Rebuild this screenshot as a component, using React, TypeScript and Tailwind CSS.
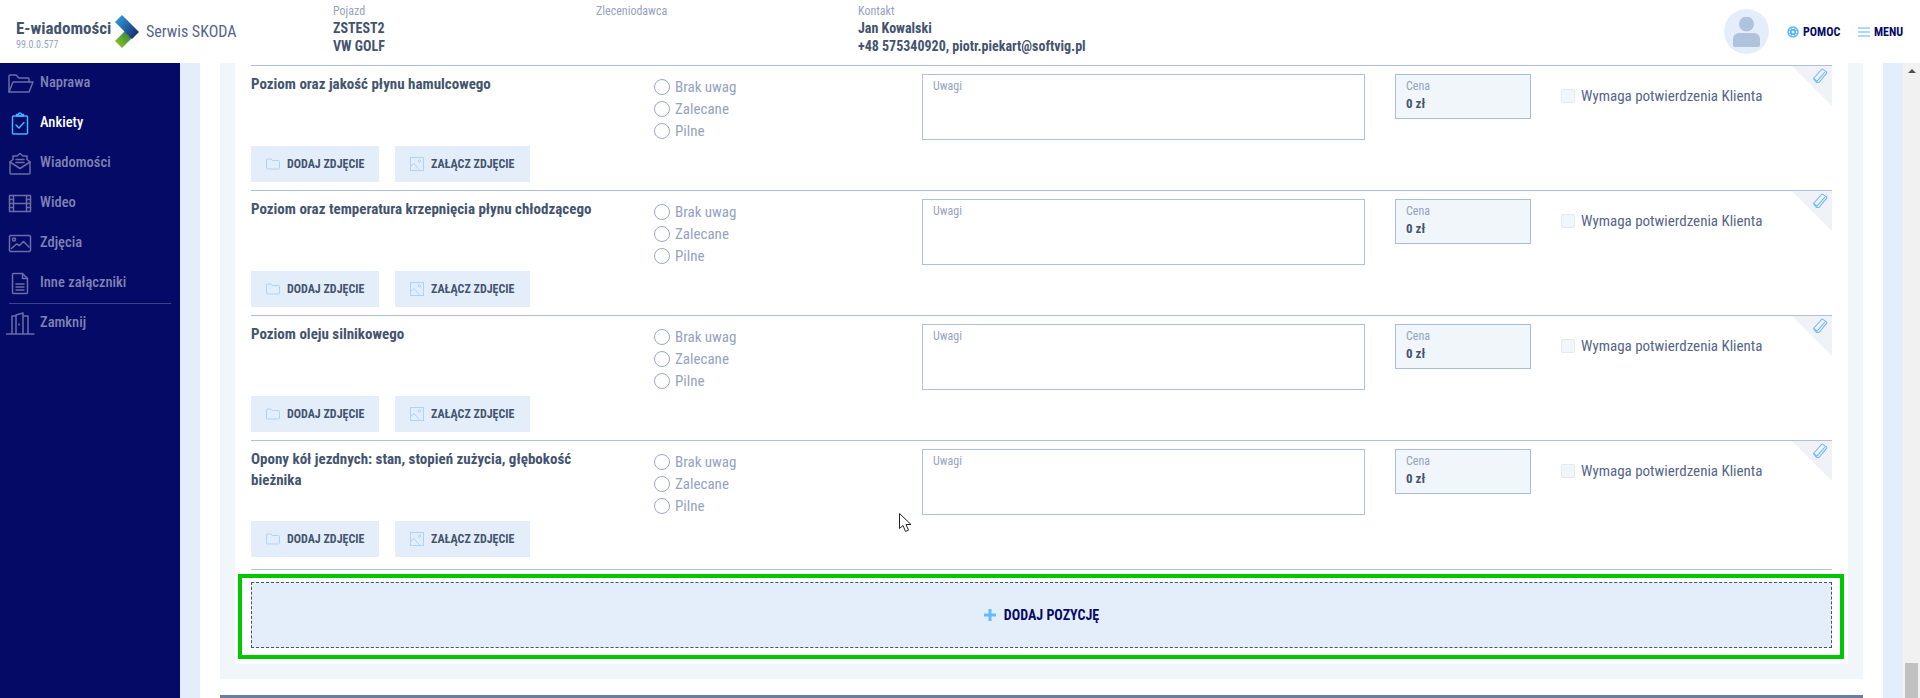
import React from "react";

const rows = [
  { title: "Poziom oraz jakość płynu hamulcowego", h: "h-[125px]" },
  { title: "Poziom oraz temperatura krzepnięcia płynu chłodzącego", h: "h-[125px]" },
  { title: "Poziom oleju silnikowego", h: "h-[125px]" },
  { title: "Opony kół jezdnych: stan, stopień zużycia, głębokość bieżnika", h: "h-[129px]" },
];

const Ico = ({ children, active }: { children: React.ReactNode; active?: boolean }) => (
  <svg width="30" height="26" viewBox="0 0 30 26" fill="none" stroke={active ? "#3fb4ff" : "#6a6da6"} strokeWidth="1.5" strokeLinejoin="round" strokeLinecap="round">
    {children}
  </svg>
);

const menu = [
  {
    label: "Naprawa",
    icon: (
      <Ico>
        <path d="M3 22V6a1 1 0 0 1 1-1h6l3 3h9a1 1 0 0 1 1 1v3" />
        <path d="M3 22l4-10h20l-4 10z" />
      </Ico>
    ),
  },
  {
    label: "Ankiety",
    active: true,
    icon: (
      <Ico active>
        <rect x="6.500" y="6" width="15" height="18" rx="1" />
        <path d="M10.500 6V4.500h2a1.500 1.500 0 0 1 3 0h2V6z" />
        <path d="M10 15l3 3 5-5.500" />
      </Ico>
    ),
  },
  {
    label: "Wiadomości",
    icon: (
      <Ico>
        <path d="M4 12v11a1 1 0 0 0 1 1h18a1 1 0 0 0 1-1V12l-3-2.500V6h-4l-3-2.500L11 6H7v3.500z" />
        <path d="M4 12l10 6.500L24 12M10 9.500h8M10 12.500h8" />
      </Ico>
    ),
  },
  {
    label: "Wideo",
    icon: (
      <Ico>
        <rect x="3.500" y="5.500" width="21" height="16" />
        <path d="M7.500 5.500v16M20.500 5.500v16M7.500 13.500h13M3.500 9.500h4M3.500 13.500h4M3.500 17.500h4M20.500 9.500h4M20.500 13.500h4M20.500 17.500h4" />
      </Ico>
    ),
  },
  {
    label: "Zdjęcia",
    icon: (
      <Ico>
        <rect x="3.500" y="5.500" width="21" height="16" rx="1" />
        <circle cx="8" cy="9.500" r="1.500" />
        <path d="M5.500 18.500l5-4.500 3 1.500 4-4 5.500 5.500" />
      </Ico>
    ),
  },
  {
    label: "Inne załączniki",
    icon: (
      <Ico>
        <path d="M7.500 3.500h9l5 5v14a1 1 0 0 1-1 1h-13a1 1 0 0 1-1-1v-18a1 1 0 0 1 1-1z" />
        <path d="M16.500 3.500v5h5M10 14h8M10 17h8M10 20h8" />
      </Ico>
    ),
  },
];

const Row = ({ title, h }: { title: string; h: string }) => (
  <div className={`relative ${h} border-t border-[#b0c0da]`}>
    {/* corner with the eraser */}
    <div className="absolute right-0 top-0 h-[40px] w-[40px] bg-[#f0f2f7] [clip-path:polygon(0_0,100%_0,100%_100%)]" />
    <svg className="absolute right-[4px] top-[2px]" width="16" height="16" viewBox="0 0 16 16" fill="none" stroke="#6cb9fb" strokeWidth="1.1" strokeLinejoin="round">
      <path d="M1.500 10.500L9.500 1.500a1 1 0 0 1 1.400-.1l3.500 2.500a1 1 0 0 1 .1 1.400L7 14.500H4.500z" />
      <path d="M1.500 10.500l3.500 2.700L13 4" />
    </svg>

    <div className="flex h-[80px] pt-[8px]">
      <div className="w-[403px] pr-[60px] text-[15px] font-bold leading-[21px] text-[#44546f]">{title}</div>
      <div className="flex w-[268px] flex-col pt-[2px]">
        {["Brak uwag", "Zalecane", "Pilne"].map((o) => (
          <label key={o} className="flex h-[22px] items-center gap-[5px] text-[15px] text-[#95a3bf]">
            <span className="h-[16px] w-[16px] rounded-full border border-[#9aa8c4] bg-white" />
            {o}
          </label>
        ))}
      </div>
      <div className="h-[66px] w-[443px] border border-[#b0c1dc] px-[10px] py-[2px] text-[12px] text-[#95a3bf]">Uwagi</div>
      <div className="ml-[30px] h-[45px] w-[136px] border border-[#a9bedc] bg-[#f1f6fb] px-[10px] pt-[3px]">
        <div className="text-[12px] leading-[16px] text-[#95a3bf]">Cena</div>
        <div className="mt-[1px] text-[13px] font-bold leading-[18px] text-[#44546f]">0 zł</div>
      </div>
      <div className="ml-[30px] mt-[14px] flex h-[16px] items-center gap-[6px] text-[15px] text-[#55668a]">
        <span className="h-[14px] w-[14px] rounded-[2px] border border-[#e4e9f2] bg-[#f1f6fb]" />
        Wymaga potwierdzenia Klienta
      </div>
    </div>

    <div className="flex gap-[16px]">
      <button className="flex h-[36px] w-[128px] items-center gap-[7px] bg-[#e4eefa] pl-[15px] text-[12px] font-bold text-[#44546f]">
        <svg width="14" height="12" viewBox="0 0 14 12" fill="none" stroke="#abd4fb" strokeWidth="1">
          <path d="M.5 10V2a1 1 0 0 1 1-1H5l1.500 1.500h6a1 1 0 0 1 1 1V10a1 1 0 0 1-1 1h-11a1 1 0 0 1-1-1z" />
        </svg>
        DODAJ ZDJĘCIE
      </button>
      <button className="flex h-[36px] w-[135px] items-center gap-[7px] bg-[#e4eefa] pl-[15px] text-[12px] font-bold text-[#44546f]">
        <svg width="14" height="14" viewBox="0 0 14 14" fill="none" stroke="#abd4fb" strokeWidth="1">
          <rect x=".5" y=".5" width="13" height="13" />
          <circle cx="9.500" cy="4" r="1.200" />
          <path d="M.5 9.500L4 6.500l6 7" />
        </svg>
        ZAŁĄCZ ZDJĘCIE
      </button>
    </div>
  </div>
);

export default function App() {
  return (
    <div className="relative flex h-screen flex-col overflow-hidden bg-white font-['Roboto',sans-serif] [font-stretch:75%]">
      {/* top bar */}
      <header className="flex h-[63px] shrink-0 items-center">
        <div className="w-[115px] pl-[16px] pt-[5px]">
          <div className="text-[17px] font-bold leading-[20px] text-[#44546f]">E-wiadomości</div>
          <div className="text-[10px] leading-[13px] text-[#95a3bf]">99.0.0.577</div>
        </div>
        <svg width="24" height="33" viewBox="0 0 24 33">
          <defs>
            <linearGradient id="top" x1="0" y1="0" x2="1" y2="0.8">
              <stop offset="0" stopColor="#2ea7e8" />
              <stop offset="1" stopColor="#1a2a6c" />
            </linearGradient>
            <linearGradient id="bot" x1="0" y1="1" x2="1" y2="0">
              <stop offset="0" stopColor="#9ccb1b" />
              <stop offset=".6" stopColor="#4c9a3a" />
              <stop offset="1" stopColor="#17566e" />
            </linearGradient>
          </defs>
          <path d="M0 26l11-11 7 0 0 7L7 33z" fill="url(#bot)" />
          <path d="M0 7l7-7 17 17-7 7z" fill="url(#top)" />
        </svg>
        <div className="ml-[7px] w-[187px] text-[16px] text-[#55668a]">Serwis SKODA</div>
        <div className="h-[63px] w-[263px] pt-[3px]">
          <div className="text-[12px] leading-[16px] text-[#95a3bf]">Pojazd</div>
          <div className="text-[14px] font-bold leading-[18px] text-[#44546f]">ZSTEST2</div>
          <div className="text-[14px] font-bold leading-[18px] text-[#44546f]">VW GOLF</div>
        </div>
        <div className="h-[63px] w-[262px] pt-[3px] text-[12px] leading-[16px] text-[#95a3bf]">Zleceniodawca</div>
        <div className="h-[63px] flex-1 pt-[3px]">
          <div className="text-[12px] leading-[16px] text-[#95a3bf]">Kontakt</div>
          <div className="text-[14px] font-bold leading-[18px] text-[#44546f]">Jan Kowalski</div>
          <div className="text-[14px] font-bold leading-[18px] text-[#44546f]">+48 575340920, piotr.piekart@softvig.pl</div>
        </div>
        <div className="flex h-[45px] w-[45px] items-center justify-center rounded-full bg-[#e4eefa]">
          <svg width="27" height="30" viewBox="0 0 27 30" fill="#b0c3dc">
            <circle cx="13.500" cy="7" r="7.500" />
            <path d="M0 28v-6a6 6 0 0 1 6-6h15a6 6 0 0 1 6 6v6a2 2 0 0 1-2 2H2a2 2 0 0 1-2-2z" />
          </svg>
        </div>
        <div className="ml-[18px] flex w-[71px] items-center gap-[4px] text-[12px] font-bold text-[#040a66]">
          <svg width="12" height="12" viewBox="0 0 12 12" fill="none" stroke="#55b6fb" strokeWidth="1.4">
            <circle cx="6" cy="6" r="5" />
            <circle cx="6" cy="6" r="2.500" />
            <path d="M1 4.500h10M1 7.500h10M4.500 1v10M7.500 1v10" strokeWidth=".8" />
          </svg>
          POMOC
        </div>
        <div className="flex w-[62px] items-center gap-[4px] text-[12px] font-bold text-[#040a66]">
          <svg width="12" height="10" viewBox="0 0 12 10" stroke="#55b6fb" strokeWidth="1">
            <path d="M0 1h12M0 5h12M0 9h12" />
          </svg>
          MENU
        </div>
      </header>

      <div className="flex min-h-0 flex-1">
        {/* side menu */}
        <aside className="w-[180px] shrink-0 bg-[#040a66]">
          {menu.map((m) => (
            <div key={m.label} className={`flex h-[40px] items-center gap-[4px] pl-[6px] text-[14.5px] font-medium ${m.active ? "text-white" : "text-[#8083b2]"}`}>
              {m.icon}
              {m.label}
            </div>
          ))}
          <div className="mx-[9px] border-t border-[#3c4189]" />
          <div className="flex h-[38px] items-center gap-[4px] pl-[6px] text-[14.5px] font-medium text-[#8083b2]">
            <Ico>
              <path d="M0 24h28M6 24V6h4M22 24V6h-5M10 24V5l7-2v21" />
              <path d="M13 14v1" />
            </Ico>
            Zamknij
          </div>
        </aside>
        <div className="w-[20px] shrink-0 bg-[#e4eefa]" />

        {/* content */}
        <main className="w-[1683px] shrink-0 px-[20px]">
          <div className="bg-[#f1f6fb] px-[15px] pb-[15px]">
            <div className="bg-white px-[16px] pb-[5px] pt-[2px]">
              {rows.map((r) => (
                <Row key={r.title} title={r.title} h={r.h} />
              ))}
              <div className="border-t border-[#b3c3d4]" />
              <div className="-mr-[12px] -ml-[13px] mt-[4px] border-4 border-[#00c800] pb-[7px] pl-[9px] pr-[8px] pt-[4px]">
                <div className="flex h-[66px] items-center justify-center gap-[8px] border border-dashed border-[#44546f] bg-[#e4eefa] text-[14px] font-bold text-[#040a66]">
                  <svg width="12" height="12" viewBox="0 0 12 12" fill="#63bbfb">
                    <path d="M4.500 0h3v4.500H12v3H7.500V12h-3V7.500H0v-3h4.500z" />
                  </svg>
                  DODAJ POZYCJĘ
                </div>
              </div>
            </div>
          </div>
          <div className="mt-[16px] h-[3px] bg-[#6b7ca3]" />
        </main>

        <div className="w-[20px] shrink-0 bg-[#e4eefa]" />
        <div className="relative w-[17px] shrink-0 bg-[#f1f1f1]">
          <div className="mx-auto mt-[6px] h-0 w-0 border-x-[4px] border-b-[4px] border-x-transparent border-b-[#505050]" />
          <div className="absolute bottom-0 left-[2px] h-[35px] w-[13px] bg-[#c1c1c1]" />
        </div>
      </div>

      {/* mouse pointer in the capture */}
      <svg className="absolute left-[899px] top-[513px]" width="13" height="20" viewBox="0 0 13 20" fill="white" stroke="#222" strokeWidth="1">
        <path d="M.5.500v15l3.500-3 2.500 6 3-1.300-2.500-5.700h5z" />
      </svg>
    </div>
  );
}
